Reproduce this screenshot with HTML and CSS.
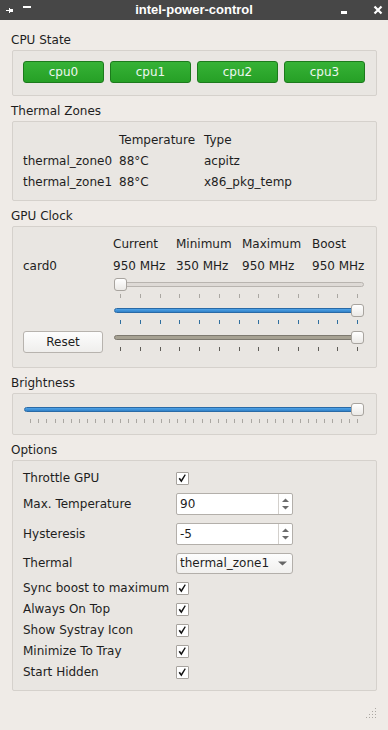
FILE: index.html
```html
<!DOCTYPE html>
<html lang="en">
<head>
  <meta charset="UTF-8">
  <title>intel-power-control</title>
  <link rel="stylesheet" href="styles.css">
</head>
<body>

  <div class="titlebar">
    <svg class="tb-left" width="40" height="20" viewBox="0 0 40 20">
      <rect x="6" y="10" width="3" height="1" fill="#fff"/>
      <rect x="9" y="8" width="1" height="5" fill="#fff"/>
      <rect x="10" y="9" width="3" height="3" fill="#fff"/>
      <rect x="23" y="6" width="8" height="2" fill="#fff"/>
    </svg>
    <div class="title">intel-power-control</div>
    <svg class="tb-right" width="48" height="20" viewBox="0 0 48 20">
      <rect x="1" y="11" width="6" height="3" fill="#fff"/>
      <path d="M34.5 6.5 L41.5 13.5 M41.5 6.5 L34.5 13.5" stroke="#fff" stroke-width="2.2"/>
    </svg>
  </div>

  <main>
    <section class="group">
      <h2 class="group-title">CPU State</h2>
      <div class="frame cpu-frame">
        <button class="cpu-btn">cpu0</button>
        <button class="cpu-btn">cpu1</button>
        <button class="cpu-btn">cpu2</button>
        <button class="cpu-btn">cpu3</button>
      </div>
    </section>

    <section class="group">
      <h2 class="group-title">Thermal Zones</h2>
      <div class="frame zones">
        <span></span><span>Temperature</span><span>Type</span>
        <span>thermal_zone0</span><span>88°C</span><span>acpitz</span>
        <span>thermal_zone1</span><span>88°C</span><span>x86_pkg_temp</span>
      </div>
    </section>

    <section class="group">
      <h2 class="group-title">GPU Clock</h2>
      <div class="frame gpu">
        <span></span><span>Current</span><span>Minimum</span><span>Maximum</span><span>Boost</span>
        <span>card0</span><span>950 MHz</span><span>350 MHz</span><span>950 MHz</span><span>950 MHz</span>

        <div class="slider gpu-slider">
          <div class="track"><span class="groove"></span><span class="handle at-min"></span></div>
          <div class="ticks"><i></i><i></i><i></i><i></i><i></i><i></i><i></i><i></i><i></i><i></i><i></i><i></i><i></i></div>
        </div>

        <div class="slider gpu-slider s-blue">
          <div class="track"><span class="groove"></span><span class="handle at-max"></span></div>
          <div class="ticks"><i></i><i></i><i></i><i></i><i></i><i></i><i></i><i></i><i></i><i></i><i></i><i></i><i></i></div>
        </div>

        <button class="reset-btn">Reset</button>
        <div class="slider gpu-slider s-muted">
          <div class="track"><span class="groove"></span><span class="handle at-max"></span></div>
          <div class="ticks"><i></i><i></i><i></i><i></i><i></i><i></i><i></i><i></i><i></i><i></i><i></i><i></i><i></i></div>
        </div>
      </div>
    </section>

    <section class="group">
      <h2 class="group-title">Brightness</h2>
      <div class="frame brightness">
        <div class="slider s-blue">
          <div class="track"><span class="groove"></span><span class="handle at-max"></span></div>
          <div class="ticks"><i></i><i></i><i></i><i></i><i></i><i></i><i></i><i></i><i></i><i></i><i></i><i></i><i></i><i></i><i></i><i></i><i></i><i></i><i></i><i></i><i></i><i></i><i></i><i></i><i></i><i></i><i></i><i></i><i></i><i></i><i></i><i></i><i></i><i></i><i></i><i></i><i></i><i></i><i></i><i></i><i></i></div>
        </div>
      </div>
    </section>

    <section class="group">
      <h2 class="group-title">Options</h2>
      <div class="frame options">
        <span>Throttle GPU</span>
        <span class="check"><svg width="13" height="13" viewBox="0 0 13 13"><path d="M2.6 6.8 L4 5.8 L5.2 7.8 L8.8 2.3 L9.8 2.9 L5.4 10.6 Z" fill="#111"/></svg></span>

        <span>Max. Temperature</span>
        <div class="spin">
          <span class="spin-value">90</span>
          <svg class="spin-arrows" width="13" height="20" viewBox="0 0 13 20">
            <polygon points="3,8 6.5,4.5 10,8" fill="#6b6b6b"/>
            <polygon points="3,12 6.5,15.5 10,12" fill="#6b6b6b"/>
          </svg>
        </div>

        <span>Hysteresis</span>
        <div class="spin">
          <span class="spin-value">-5</span>
          <svg class="spin-arrows" width="13" height="20" viewBox="0 0 13 20">
            <polygon points="3,8 6.5,4.5 10,8" fill="#6b6b6b"/>
            <polygon points="3,12 6.5,15.5 10,12" fill="#6b6b6b"/>
          </svg>
        </div>

        <span>Thermal</span>
        <div class="combo">
          <span>thermal_zone1</span>
          <svg width="9" height="5" viewBox="0 0 9 5"><polygon points="0,0.5 9,0.5 4.5,4.5" fill="#666"/></svg>
        </div>

        <span>Sync boost to maximum</span>
        <span class="check"><svg width="13" height="13" viewBox="0 0 13 13"><path d="M2.6 6.8 L4 5.8 L5.2 7.8 L8.8 2.3 L9.8 2.9 L5.4 10.6 Z" fill="#111"/></svg></span>

        <span>Always On Top</span>
        <span class="check"><svg width="13" height="13" viewBox="0 0 13 13"><path d="M2.6 6.8 L4 5.8 L5.2 7.8 L8.8 2.3 L9.8 2.9 L5.4 10.6 Z" fill="#111"/></svg></span>

        <span>Show Systray Icon</span>
        <span class="check"><svg width="13" height="13" viewBox="0 0 13 13"><path d="M2.6 6.8 L4 5.8 L5.2 7.8 L8.8 2.3 L9.8 2.9 L5.4 10.6 Z" fill="#111"/></svg></span>

        <span>Minimize To Tray</span>
        <span class="check"><svg width="13" height="13" viewBox="0 0 13 13"><path d="M2.6 6.8 L4 5.8 L5.2 7.8 L8.8 2.3 L9.8 2.9 L5.4 10.6 Z" fill="#111"/></svg></span>

        <span>Start Hidden</span>
        <span class="check"><svg width="13" height="13" viewBox="0 0 13 13"><path d="M2.6 6.8 L4 5.8 L5.2 7.8 L8.8 2.3 L9.8 2.9 L5.4 10.6 Z" fill="#111"/></svg></span>
      </div>
    </section>

    <div class="grip">
      <svg width="12" height="12" viewBox="0 0 12 12" fill="#aba7a2">
        <rect x="10" y="1" width="1" height="1"/>
        <rect x="7" y="4" width="1" height="1"/><rect x="10" y="4" width="1" height="1"/>
        <rect x="4" y="7" width="1" height="1"/><rect x="7" y="7" width="1" height="1"/><rect x="10" y="7" width="1" height="1"/>
        <rect x="1" y="10" width="1" height="1"/><rect x="4" y="10" width="1" height="1"/><rect x="7" y="10" width="1" height="1"/><rect x="10" y="10" width="1" height="1"/>
      </svg>
    </div>
  </main>

</body>
</html>
```

FILE: styles.css
```css
body {
  margin: 0;
  background: #efebe7;
  font-family: "DejaVu Sans", sans-serif;
  font-size: 12px;
  color: #1e1e1e;
}

/* window decoration */
.titlebar {
  display: grid;
  grid-template-columns: 1fr auto 1fr;
  align-items: center;
  height: 20px;
  background: #474747;
}

.tb-left, .tb-right { display: block; }
.tb-right { justify-self: end; }

.title {
  font-family: "Liberation Sans", Arial, sans-serif;
  font-weight: bold;
  font-size: 13px;
  line-height: 20px;
  color: #fff;
}

/* group boxes */
.group-title {
  margin: 8px 0 3px 11px;
  font-size: 12px;
  font-weight: normal;
  line-height: 14px;
}

.group:first-child .group-title { margin-top: 13px; }

.frame {
  margin: 0 11px 0 12px;
  border: 1px solid #d5d1cc;
  border-radius: 2px;
  background: #e9e6e2;
}

/* cpu state */
.cpu-frame {
  display: flex;
  gap: 6px;
  padding: 10px 11px 12px 10px;
}

.cpu-btn {
  flex: 1;
  height: 22px;
  padding: 0;
  border: 1px solid #1c7a1c;
  border-radius: 3px;
  background: linear-gradient(#36b236, #26a026);
  color: #eef6f0;
  font-family: inherit;
  font-size: 12px;
  line-height: 20px;
}

/* thermal zones */
.zones {
  display: grid;
  grid-template-columns: 96px 85px auto;
  row-gap: 7px;
  padding: 11px 10px 11px 10px;
  line-height: 14px;
}

/* gpu clock */
.gpu {
  display: grid;
  grid-template-columns: 90px 63px 66px 70px 52px;
  grid-template-rows: 22px 19px 26px 27px 22px;
  padding: 10px 12px 14px 10px;
  line-height: 14px;
  white-space: nowrap;
}

.gpu-slider {
  grid-column: 2 / 6;
  margin-left: 1px;
}

.reset-btn {
  width: 80px;
  height: 22px;
  padding: 0;
  border: 1px solid #b7b3ae;
  border-radius: 3px;
  background: linear-gradient(#fdfdfd, #efeeec);
  color: #1e1e1e;
  font-family: inherit;
  font-size: 12px;
}

/* sliders */
.track {
  position: relative;
  height: 13px;
}

.groove {
  position: absolute;
  left: 0;
  right: 0;
  top: 4px;
  height: 5px;
  box-sizing: border-box;
  border: 1px solid #b8b4af;
  border-radius: 3px;
  background: #dedad6;
}

.handle {
  position: absolute;
  top: 0;
  width: 13px;
  height: 13px;
  box-sizing: border-box;
  border: 1px solid #a8a49f;
  border-radius: 3px;
  background: linear-gradient(#ffffff, #ebe9e6);
}

.at-min { left: 0; }
.at-max { right: 0; }

.ticks {
  display: flex;
  justify-content: space-between;
  margin-top: 3px;
  padding: 0 6px;
}

.ticks i {
  width: 1px;
  height: 4px;
  background: #aaa7a2;
}

.s-blue .groove {
  background: linear-gradient(#4fa3e8, #3282c8);
  border-color: #2a6aa6;
}
.s-blue .ticks i { background: #2f6f9f; }

.s-muted .groove {
  background: #a6a192;
  border-color: #7d796f;
}
.s-muted .ticks i { background: #5e5c57; }

.brightness .ticks i { background: #aaa7a2; }

.brightness {
  padding: 9px 12px 11px 11px;
}

/* options */
.options {
  display: grid;
  grid-template-columns: 153px 117px;
  row-gap: 8px;
  align-items: center;
  padding: 11px 12px 11px 10px;
  line-height: 13px;
}

.check {
  display: block;
  width: 13px;
  height: 13px;
  box-sizing: border-box;
  border: 1px solid #a7a39e;
  border-radius: 1px;
  background: #fff;
}

.check svg {
  display: block;
  margin: -1px;
}

.spin {
  display: flex;
  height: 22px;
  box-sizing: border-box;
  border: 1px solid #b3afaa;
  border-radius: 2px;
  background: #fff;
}

.spin-value {
  flex: 1;
  padding-left: 3px;
  line-height: 20px;
}

.spin-arrows {
  display: block;
  border-left: 1px solid #d3d0cc;
}

.combo {
  display: flex;
  align-items: center;
  justify-content: space-between;
  height: 21px;
  box-sizing: border-box;
  padding: 0 5px 0 3px;
  border: 1px solid #b3afaa;
  border-radius: 3px;
  background: linear-gradient(#fdfdfd, #f1f0ee);
}

.grip {
  display: flex;
  justify-content: flex-end;
  margin: 16px 11px 0 0;
}
```
